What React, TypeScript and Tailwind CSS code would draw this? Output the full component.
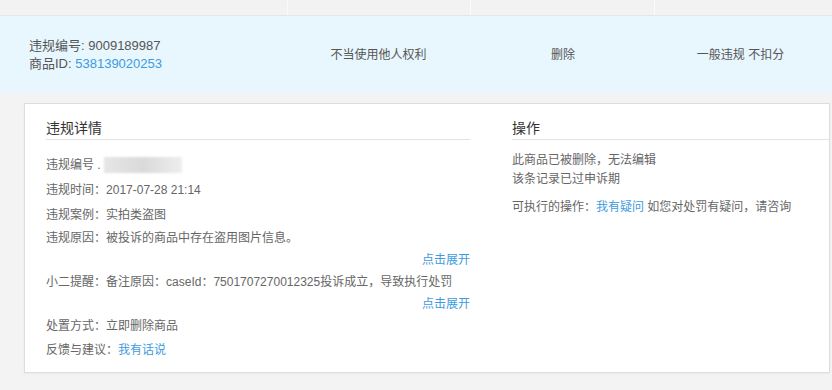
const font = { fontFamily: '"Liberation Sans", "Noto Sans CJK SC", sans-serif' }

function DetailRow({ label, children, h = 'h-[25px]' }: { label: string; children: React.ReactNode; h?: string }) {
  return (
    <div className={`flex items-center ${h} text-[12px] text-[#666]`}>
      <span>{label}：</span>
      <span>{children}</span>
    </div>
  )
}

function ExpandLink() {
  return <div className="flex h-[22px] items-center justify-end text-[12px] text-[#3d9be0]">点击展开</div>
}

export default function App() {
  return (
    <div className="h-[390px] w-[832px] overflow-hidden bg-[#f3f3f3]" style={font}>
      {/* table head strip */}
      <div className="grid h-[16px] grid-cols-[288px_183px_184px_1fr] border-b border-[#e6e6e6] bg-[#f2f2f2]">
        <div className="border-r border-[#fafafa]" />
        <div className="border-r border-[#fafafa]" />
        <div className="border-r border-[#fafafa]" />
        <div />
      </div>

      {/* violation row */}
      <div className="grid h-[77px] grid-cols-[288px_183px_184px_1fr] items-center bg-[#e8f6fd] text-[12px] text-[#555]">
        <div className="pl-[29px] text-[13px] leading-[18px]">
          <div>违规编号: 9009189987</div>
          <div>
            商品ID: <span className="text-[#3d9be0]">538139020253</span>
          </div>
        </div>
        <div className="pr-[2px] text-center">不当使用他人权利</div>
        <div className="text-center">删除</div>
        <div className="pr-[6px] text-center">一般违规 不扣分</div>
      </div>

      {/* detail card */}
      <div className="pt-[10px] pl-[24px]">
        <div className="flex h-[270px] w-[806px] border border-[#dddddd] bg-white pl-[21px] shadow-[0_1px_2px_rgba(0,0,0,0.04)]">
          <div className="w-[424px]">
            <div className="mt-[13px] border-b border-[#e2e2e2] text-[14px] leading-[22px] text-[#333]">违规详情</div>
            <div className="mt-[12px]">
              <div className="flex h-[25px] items-center text-[12px] text-[#666]">
                <span>违规编号 .</span>
                <span className="ml-[3px] h-[16px] w-[78px] bg-gradient-to-r from-[#e6e6e6] via-[#dadada] to-[#eeeeee] blur-[1px]" />
              </div>
              <DetailRow label="违规时间">2017-07-28 21:14</DetailRow>
              <DetailRow label="违规案例">实拍类盗图</DetailRow>
              <DetailRow label="违规原因" h="h-[22px]">被投诉的商品中存在盗用图片信息。</DetailRow>
              <ExpandLink />
              <DetailRow label="小二提醒" h="h-[22px]">
                备注原因：caseId：7501707270012325投诉成立，导致执行处罚
              </DetailRow>
              <ExpandLink />
              <DetailRow label="处置方式" h="h-[22px]">立即删除商品</DetailRow>
              <DetailRow label="反馈与建议" h="h-[26px]">
                <span className="text-[#3d9be0]">我有话说</span>
              </DetailRow>
            </div>
          </div>

          <div className="ml-[42px] flex-1">
            <div className="mt-[13px] border-b border-[#e2e2e2] text-[14px] leading-[22px] text-[#333]">操作</div>
            <div className="mt-[11px] text-[12px] leading-[19px] text-[#666]">
              <div>此商品已被删除，无法编辑</div>
              <div>该条记录已过申诉期</div>
              <div className="mt-[9px]">
                可执行的操作：<span className="text-[#3d9be0]">我有疑问</span> 如您对处罚有疑问，请咨询
              </div>
            </div>
          </div>
        </div>
      </div>
    </div>
  )
}
